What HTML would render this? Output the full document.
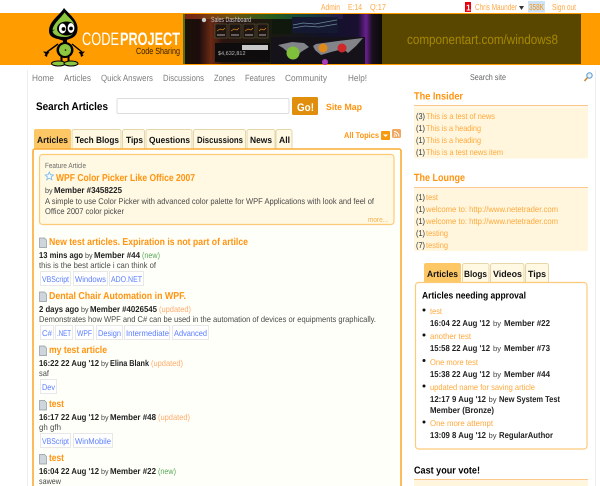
<!DOCTYPE html>
<html lang="en"><head><meta charset="utf-8"><title>Code Project</title>
<style>
html,body{margin:0;padding:0;background:#fff;width:600px;height:486px;overflow:hidden}
svg{display:block;font-family:"Liberation Sans",sans-serif;font-size:8.4px;text-rendering:geometricPrecision;filter:blur(.3px)}
.o{fill:#ff9410;font-weight:bold}
.l{fill:#ffa93c}
.k{fill:#222;font-weight:bold;font-size:8.6px}
.g{fill:#4a4a4a}
.n{fill:#7e7e7e;font-size:9px}
.t{fill:#5a7eff}
.tb{fill:#111;font-weight:bold;font-size:9px}
.tag{fill:#fff;stroke:#e8e8e8}
.c{fill:#333;font-size:8.400px}
.by{fill:#444;font-size:7.600px}
</style></head><body>
<svg width="600" height="486" viewBox="0 0 600 486" xmlns="http://www.w3.org/2000/svg">
<defs>
<linearGradient id="bn" x1="0" x2="1" y1="0" y2="0"><stop offset="0" stop-color="#1a1408"/><stop offset=".08" stop-color="#1c0c0c"/><stop offset=".14" stop-color="#6a2a14"/><stop offset=".2" stop-color="#2a1410"/><stop offset=".45" stop-color="#1a1a10"/><stop offset=".72" stop-color="#12122a"/><stop offset=".88" stop-color="#1a1030"/><stop offset=".92" stop-color="#6a1f90"/><stop offset=".95" stop-color="#1a1020"/><stop offset="1" stop-color="#0c0a08"/></linearGradient>
<linearGradient id="tp" x1="0" x2="1" y1="0" y2="0"><stop offset="0" stop-color="#8a2418"/><stop offset=".3" stop-color="#7a5a10"/><stop offset=".55" stop-color="#2a6a1c"/><stop offset=".75" stop-color="#145040"/><stop offset="1" stop-color="#2a1a50"/></linearGradient>
</defs>
<!-- top links -->
<g fill="#ffa844" font-size="8.800">
<text x="321" y="10" textLength="19" lengthAdjust="spacingAndGlyphs">Admin</text>
<text x="348" y="10" textLength="14" lengthAdjust="spacingAndGlyphs">E:14</text>
<text x="370" y="10" textLength="16" lengthAdjust="spacingAndGlyphs">Q:17</text>
<text x="475" y="10" textLength="42" lengthAdjust="spacingAndGlyphs">Chris Maunder</text>
<text x="552" y="10" textLength="24" lengthAdjust="spacingAndGlyphs">Sign out</text>
</g>
<rect x="465" y="2" width="6" height="10" fill="#e8000c"/>
<text x="466" y="10.500" fill="#fff" font-weight="bold" font-size="8.500">1</text>
<path d="M519 6h5l-2.500 4z" fill="#333"/>
<rect x="528" y="1" width="17" height="11.500" fill="#cfe3f6"/>
<text x="529" y="10" fill="#f79410" font-size="8.800" textLength="15" lengthAdjust="spacingAndGlyphs">358K</text>
<!-- orange band -->
<rect x="0" y="13" width="600" height="52" fill="#ff9c00"/>
<rect x="183" y="14" width="199" height="50" fill="url(#bn)"/>
<rect x="382" y="14" width="199" height="50" fill="#594700"/>
<rect x="183" y="14" width="160" height="5" fill="url(#tp)" opacity=".85"/>
<rect x="183" y="14" width="2" height="50" fill="#5d6a18"/>
<!-- dashboard detail -->
<circle cx="204" cy="20" r="2.200" fill="#ccc"/>
<text x="211" y="22" fill="#c8c8c8" font-size="7.500" textLength="40" lengthAdjust="spacingAndGlyphs">Sales Dashboard</text>
<g fill="#1e1410" stroke="#6f6f48" stroke-width=".5">
<rect x="215" y="24" width="12" height="14"/><rect x="229" y="24" width="12" height="14"/><rect x="243" y="24" width="12" height="14"/><rect x="257" y="24" width="11" height="14"/>
</g>
<path d="M217 31l3-2 3 1 2-2M231 31l3-2 3 1 2-2M245 31l3-2 3 1 2-2M259 31l2-2 3 1 2-2" stroke="#d88a20" stroke-width=".7" fill="none"/>
<path d="M217 35h8M231 35h8M245 35h8M259 35h7" stroke="#aaa" stroke-width="1"/>
<rect x="215" y="43" width="55" height="19" fill="#0e0c0c"/>
<text x="218" y="55" fill="#bbb" font-size="5.500">$4,632,812</text>
<rect x="242" y="45" width="26" height="5" fill="#c8c8c8"/>
<rect x="272" y="19" width="20" height="15" fill="#10180e"/>
<rect x="292" y="17" width="46" height="16" fill="#141830"/>
<path d="M293 25l10-2 12 1 22-4M293 28l12-2 14 1 18-3" stroke="#6f8a9a" stroke-width=".7" fill="none"/>
<rect x="271" y="37" width="94" height="27" fill="#15121a"/>
<path d="M278 45l14-3 12 1 5 4-8 5-4 4-8-3-6-5zM316 44l22-3 25-3-7 8-8 7-5-4-12 3-10 3-6-5-2-4z" fill="#83838a"/>
<circle cx="293" cy="53" r="6.500" fill="#7fbf3a"/>
<circle cx="323" cy="48" r="4.500" fill="#e08a1c"/>
<circle cx="342" cy="48" r="4.500" fill="#d02828"/>
<circle cx="325" cy="62" r="3" fill="#a83cb8"/>
<text x="407" y="44" fill="#a58800" font-size="13.500" textLength="151" lengthAdjust="spacingAndGlyphs">componentart.com/windows8</text>
<!-- logo -->
<path d="M64 8C60 15 49 21 49 31C49 36 53 38 58 39L64 41L72 38C76 36 77.500 33 77.500 28C77.500 20 69 14 64 8Z" fill="#000"/>
<path d="M64.500 12.500C61 18 53.500 23 52.500 30L75 27C74.500 21 68 17 64.500 12.500Z" fill="#8dc63f"/>
<path d="M52.500 31C53 35 58 37 65 37C70 37 74.500 34 75 29L60 27Z" fill="#8dc63f"/>
<ellipse cx="66.500" cy="28.500" rx="9.500" ry="7" fill="#000"/>
<ellipse cx="62.500" cy="28.500" rx="3.600" ry="5" fill="#fff"/>
<ellipse cx="71" cy="28" rx="3.400" ry="5" fill="#fff"/>
<circle cx="63.500" cy="29" r="1.900" fill="#000"/><circle cx="71" cy="28.500" r="1.900" fill="#000"/>
<ellipse cx="65" cy="50" rx="8.500" ry="8" fill="#000"/>
<ellipse cx="65" cy="50" rx="6" ry="6" fill="#8dc63f"/>
<circle cx="65.500" cy="50" r=".8" fill="#000"/>
<rect x="63" y="38" width="4" height="6" fill="#000"/>
<path d="M58 44L47 52M72 44L82 52" stroke="#000" stroke-width="1.400" fill="none"/>
<path d="M43 51.500l6.500.5-2 2.500-.5 2.500-2.500-1.500 1-1.500z" fill="#000"/><path d="M85 51.500l-6.500.5 2 2.500.5 2.500 2.500-1.500-1-1.500z" fill="#000"/>
<path d="M61.500 57v4M68.500 57v4" stroke="#000" stroke-width="2"/>
<ellipse cx="58.500" cy="63.500" rx="7" ry="2.500" fill="#8dc63f" stroke="#000" stroke-width="1"/>
<ellipse cx="71" cy="63.500" rx="7" ry="2.500" fill="#8dc63f" stroke="#000" stroke-width="1"/>
<text x="82" y="45" fill="#fff" font-size="18" textLength="37" lengthAdjust="spacingAndGlyphs">CODE</text>
<text x="120" y="45" fill="#fff" font-size="18" font-weight="bold" textLength="60" lengthAdjust="spacingAndGlyphs">PROJECT</text>
<text x="136" y="54" fill="#2e1e00" font-size="9" textLength="44" lengthAdjust="spacingAndGlyphs">Code Sharing</text>
<!-- page rails -->
<rect x="27" y="70" width="1" height="416" fill="#eee"/>
<rect x="595" y="70" width="1" height="416" fill="#eee"/>
<!-- nav -->
<g class="n">
<text x="32" y="81" textLength="22" lengthAdjust="spacingAndGlyphs">Home</text>
<text x="64" y="81" textLength="27" lengthAdjust="spacingAndGlyphs">Articles</text>
<text x="101" y="81" textLength="52" lengthAdjust="spacingAndGlyphs">Quick Answers</text>
<text x="163" y="81" textLength="41" lengthAdjust="spacingAndGlyphs">Discussions</text>
<text x="214" y="81" textLength="21" lengthAdjust="spacingAndGlyphs">Zones</text>
<text x="245" y="81" textLength="30" lengthAdjust="spacingAndGlyphs">Features</text>
<text x="285" y="81" textLength="42" lengthAdjust="spacingAndGlyphs">Community</text>
<text x="348" y="81" textLength="19" lengthAdjust="spacingAndGlyphs">Help!</text>
</g>
<text x="470" y="80" fill="#666" font-size="8.500" textLength="36" lengthAdjust="spacingAndGlyphs">Search site</text>
<circle cx="589.500" cy="75.500" r="2.700" fill="#e8f2fb" stroke="#5b9bd5" stroke-width="1"/>
<path d="M587.500 77.500L584.500 81" stroke="#c98a3a" stroke-width="1.600"/>
<!-- search -->
<text x="36" y="110" fill="#000" font-weight="bold" font-size="11" textLength="72" lengthAdjust="spacingAndGlyphs">Search Articles</text>
<rect x="117" y="98.500" width="172" height="15" rx="1.500" fill="#fff" stroke="#ddd"/>
<rect x="292" y="97" width="26" height="18" rx="1.500" fill="#e08e0b"/>
<text x="297" y="111" fill="#fff" font-weight="bold" font-size="11" textLength="17" lengthAdjust="spacingAndGlyphs">Go!</text>
<text x="326" y="110" class="o" font-size="9" textLength="36" lengthAdjust="spacingAndGlyphs">Site Map</text>
<!-- tabs -->
<g fill="#fff8e2" stroke="#e6d6a8">
<rect x="72" y="129.500" width="49" height="20" rx="2"/>
<rect x="122.500" y="129.500" width="22" height="20" rx="2"/>
<rect x="146" y="129.500" width="46" height="20" rx="2"/>
<rect x="193.500" y="129.500" width="52" height="20" rx="2"/>
<rect x="247" y="129.500" width="28" height="20" rx="2"/>
<rect x="276" y="129.500" width="16" height="20" rx="2"/>
</g>
<rect x="34" y="129" width="37" height="21" rx="2" fill="#fdc766"/>
<g class="tb">
<text x="37" y="143" textLength="31" lengthAdjust="spacingAndGlyphs">Articles</text>
<text x="75" y="143" textLength="44" lengthAdjust="spacingAndGlyphs">Tech Blogs</text>
<text x="126" y="143" textLength="17" lengthAdjust="spacingAndGlyphs">Tips</text>
<text x="149" y="143" textLength="41" lengthAdjust="spacingAndGlyphs">Questions</text>
<text x="197" y="143" textLength="46" lengthAdjust="spacingAndGlyphs">Discussions</text>
<text x="250" y="143" textLength="22" lengthAdjust="spacingAndGlyphs">News</text>
<text x="279" y="143" textLength="11" lengthAdjust="spacingAndGlyphs">All</text>
</g>
<text x="344" y="138" class="o" textLength="35" lengthAdjust="spacingAndGlyphs">All Topics</text>
<rect x="381" y="131" width="9" height="9" rx="1" fill="#f79a10"/>
<path d="M383 134.500h5l-2.500 2.500z" fill="#fff"/>
<rect x="392" y="129" width="9" height="9" rx="1.500" fill="#f0a860"/>
<path d="M394 131.500a5 5 0 0 1 5 5M394 133.800a2.700 2.700 0 0 1 2.700 2.700" stroke="#fff" stroke-width=".9" fill="none"/><circle cx="394.500" cy="136" r=".8" fill="#fff"/>
<!-- main panel -->
<rect x="33" y="149" width="368" height="345" rx="2" fill="#fffffa" stroke="#fbac36" stroke-width="1.600"/>
<rect x="39.500" y="154.500" width="354.500" height="70" rx="3" fill="#fff8e2" stroke="#fdca7a" stroke-width="1.200"/>
<text x="45" y="168" fill="#666" font-size="7.500" textLength="41" lengthAdjust="spacingAndGlyphs">Feature Article</text>
<path d="M49.300 172l1.200 2.700 2.900.3-2.200 1.900.7 2.900-2.600-1.600-2.600 1.600.7-2.900-2.200-1.900 2.900-.3z" fill="#f4fbff" stroke="#7ab8e8" stroke-width=".8"/>
<text x="56" y="181" class="o" font-size="10" textLength="139" lengthAdjust="spacingAndGlyphs">WPF Color Picker Like Office 2007</text>
<text x="45" y="193" class="by" textLength="7.500" lengthAdjust="spacingAndGlyphs">by</text>
<text x="54" y="193" class="k" textLength="68" lengthAdjust="spacingAndGlyphs">Member #3458225</text>
<text x="45" y="204" class="g" textLength="329" lengthAdjust="spacingAndGlyphs">A simple to use Color Picker with advanced color palette for WPF Applications with look and feel of</text>
<text x="45" y="214" class="g" textLength="79" lengthAdjust="spacingAndGlyphs">Office 2007 color picker</text>
<text x="368" y="222" fill="#f5b050" font-size="7.500" textLength="20" lengthAdjust="spacingAndGlyphs">more...</text>
<!-- doc icons -->
<g fill="#cfd5dc" stroke="#8f98a0" stroke-width=".7">
<path d="M39.500 238h5l2 2v7.500h-7z"/><path d="M39.500 292h5l2 2v7.500h-7z"/><path d="M39.500 346h5l2 2v7.500h-7z"/><path d="M39.500 400.500h5l2 2v7.500h-7z"/><path d="M39.500 454.500h5l2 2v7.500h-7z"/>
</g>
<!-- article 1 -->
<text x="49" y="245" class="o" font-size="10" textLength="199" lengthAdjust="spacingAndGlyphs">New test articles. Expiration is not part of artilce</text>
<text x="39" y="258" class="k" textLength="44" lengthAdjust="spacingAndGlyphs">13 mins ago</text>
<text x="85" y="258" class="by" textLength="7.500" lengthAdjust="spacingAndGlyphs">by</text>
<text x="94" y="258" class="k" textLength="46" lengthAdjust="spacingAndGlyphs">Member #44</text>
<text x="142" y="258" fill="#5aa85a" textLength="18" lengthAdjust="spacingAndGlyphs">(new)</text>
<text x="39" y="268" class="g" textLength="117" lengthAdjust="spacingAndGlyphs">this is the best article i can think of</text>
<rect class="tag" x="40.500" y="271.500" width="30" height="14"/><rect class="tag" x="73.500" y="271.500" width="34" height="14"/><rect class="tag" x="109.500" y="271.500" width="34" height="14"/>
<text x="42" y="282" class="t" textLength="27" lengthAdjust="spacingAndGlyphs">VBScript</text>
<text x="75" y="282" class="t" textLength="31" lengthAdjust="spacingAndGlyphs">Windows</text>
<text x="111" y="282" class="t" textLength="31" lengthAdjust="spacingAndGlyphs">ADO.NET</text>
<!-- article 2 -->
<text x="49" y="299" class="o" font-size="10" textLength="137" lengthAdjust="spacingAndGlyphs">Dental Chair Automation in WPF.</text>
<text x="39" y="312" class="k" textLength="40" lengthAdjust="spacingAndGlyphs">2 days ago</text>
<text x="81" y="312" class="by" textLength="7.500" lengthAdjust="spacingAndGlyphs">by</text>
<text x="90" y="312" class="k" textLength="67" lengthAdjust="spacingAndGlyphs">Member #4026545</text>
<text x="159" y="312" fill="#ffac6c" textLength="32" lengthAdjust="spacingAndGlyphs">(updated)</text>
<text x="39" y="322" class="g" textLength="337" lengthAdjust="spacingAndGlyphs">Demonstrates how WPF and C# can be used in the automation of devices or equipments graphically.</text>
<rect class="tag" x="40.500" y="325.500" width="13" height="14"/><rect class="tag" x="55.500" y="325.500" width="17" height="14"/><rect class="tag" x="75.500" y="325.500" width="18" height="14"/><rect class="tag" x="96.500" y="325.500" width="26" height="14"/><rect class="tag" x="124.500" y="325.500" width="45" height="14"/><rect class="tag" x="172.500" y="325.500" width="36" height="14"/>
<text x="42" y="336" class="t" textLength="10" lengthAdjust="spacingAndGlyphs">C#</text>
<text x="57" y="336" class="t" textLength="14" lengthAdjust="spacingAndGlyphs">.NET</text>
<text x="77" y="336" class="t" textLength="15" lengthAdjust="spacingAndGlyphs">WPF</text>
<text x="98" y="336" class="t" textLength="23" lengthAdjust="spacingAndGlyphs">Design</text>
<text x="126" y="336" class="t" textLength="43" lengthAdjust="spacingAndGlyphs">Intermediate</text>
<text x="174" y="336" class="t" textLength="33" lengthAdjust="spacingAndGlyphs">Advanced</text>
<!-- article 3 -->
<text x="49" y="353" class="o" font-size="10" textLength="58" lengthAdjust="spacingAndGlyphs">my test article</text>
<text x="39" y="366" class="k" textLength="60" lengthAdjust="spacingAndGlyphs">16:22 22 Aug '12</text>
<text x="101" y="366" class="by" textLength="7.500" lengthAdjust="spacingAndGlyphs">by</text>
<text x="110" y="366" class="k" textLength="39" lengthAdjust="spacingAndGlyphs">Elina Blank</text>
<text x="151" y="366" fill="#ffac6c" textLength="32" lengthAdjust="spacingAndGlyphs">(updated)</text>
<text x="39" y="376" class="g" textLength="10" lengthAdjust="spacingAndGlyphs">saf</text>
<rect class="tag" x="40.500" y="379.500" width="16" height="14"/>
<text x="42" y="390" class="t" textLength="13" lengthAdjust="spacingAndGlyphs">Dev</text>
<!-- article 4 -->
<text x="49" y="407" class="o" font-size="10" textLength="15" lengthAdjust="spacingAndGlyphs">test</text>
<text x="39" y="420" class="k" textLength="60" lengthAdjust="spacingAndGlyphs">16:17 22 Aug '12</text>
<text x="101" y="420" class="by" textLength="7.500" lengthAdjust="spacingAndGlyphs">by</text>
<text x="110" y="420" class="k" textLength="46" lengthAdjust="spacingAndGlyphs">Member #48</text>
<text x="158" y="420" fill="#ffac6c" textLength="32" lengthAdjust="spacingAndGlyphs">(updated)</text>
<text x="39" y="430" class="g" textLength="22" lengthAdjust="spacingAndGlyphs">gh gfh</text>
<rect class="tag" x="40.500" y="433.500" width="30" height="14"/><rect class="tag" x="73.500" y="433.500" width="39" height="14"/>
<text x="42" y="444" class="t" textLength="27" lengthAdjust="spacingAndGlyphs">VBScript</text>
<text x="75" y="444" class="t" textLength="36" lengthAdjust="spacingAndGlyphs">WinMobile</text>
<!-- article 5 -->
<text x="49" y="461" class="o" font-size="10" textLength="15" lengthAdjust="spacingAndGlyphs">test</text>
<text x="39" y="474" class="k" textLength="60" lengthAdjust="spacingAndGlyphs">16:04 22 Aug '12</text>
<text x="101" y="474" class="by" textLength="7.500" lengthAdjust="spacingAndGlyphs">by</text>
<text x="110" y="474" class="k" textLength="46" lengthAdjust="spacingAndGlyphs">Member #22</text>
<text x="158" y="474" fill="#5aa85a" textLength="18" lengthAdjust="spacingAndGlyphs">(new)</text>
<text x="39" y="484" class="g" textLength="22" lengthAdjust="spacingAndGlyphs">sawew</text>
<!-- Insider -->
<text x="414" y="99.500" class="o" font-size="10.500" textLength="49" lengthAdjust="spacingAndGlyphs">The Insider</text>
<rect x="414" y="105" width="174" height="1.200" fill="#fdc98a"/>
<rect x="414" y="107.500" width="174" height="51" rx="1.500" fill="#fff6dd"/>
<g class="c">
<text x="416" y="119" textLength="9" lengthAdjust="spacingAndGlyphs">(3)</text><text x="416" y="131" textLength="9" lengthAdjust="spacingAndGlyphs">(1)</text><text x="416" y="143" textLength="9" lengthAdjust="spacingAndGlyphs">(1)</text><text x="416" y="155" textLength="9" lengthAdjust="spacingAndGlyphs">(1)</text>
</g>
<g class="l">
<text x="426" y="119" textLength="69" lengthAdjust="spacingAndGlyphs">This is a test of news</text>
<text x="426" y="131" textLength="55" lengthAdjust="spacingAndGlyphs">This is a heading</text>
<text x="426" y="143" textLength="55" lengthAdjust="spacingAndGlyphs">This is a heading</text>
<text x="426" y="155" textLength="77" lengthAdjust="spacingAndGlyphs">This is a test news item</text>
</g>
<!-- Lounge -->
<text x="414" y="181" class="o" font-size="10.500" textLength="51" lengthAdjust="spacingAndGlyphs">The Lounge</text>
<rect x="414" y="187" width="174" height="1.200" fill="#fdc98a"/>
<rect x="414" y="189" width="174" height="62" rx="1.500" fill="#fff6dd"/>
<g class="c">
<text x="416" y="200" textLength="9" lengthAdjust="spacingAndGlyphs">(1)</text><text x="416" y="212" textLength="9" lengthAdjust="spacingAndGlyphs">(1)</text><text x="416" y="224" textLength="9" lengthAdjust="spacingAndGlyphs">(1)</text><text x="416" y="236" textLength="9" lengthAdjust="spacingAndGlyphs">(1)</text><text x="416" y="248" textLength="9" lengthAdjust="spacingAndGlyphs">(7)</text>
</g>
<g class="l">
<text x="426" y="200" textLength="12" lengthAdjust="spacingAndGlyphs">test</text>
<text x="426" y="212" textLength="132" lengthAdjust="spacingAndGlyphs">welcome to: http://www.netetrader.com</text>
<text x="426" y="224" textLength="132" lengthAdjust="spacingAndGlyphs">welcome to: http://www.netetrader.com</text>
<text x="426" y="236" textLength="22" lengthAdjust="spacingAndGlyphs">testing</text>
<text x="426" y="248" textLength="22" lengthAdjust="spacingAndGlyphs">testing</text>
</g>
<!-- side tabs -->
<g fill="#fff8e2" stroke="#e6d6a8">
<rect x="462.500" y="263.500" width="26.500" height="20" rx="2"/>
<rect x="490.500" y="263.500" width="33.500" height="20" rx="2"/>
<rect x="525.500" y="263.500" width="23" height="20" rx="2"/>
</g>
<rect x="424" y="263" width="37" height="20" rx="2" fill="#fdc766"/>
<g class="tb">
<text x="427" y="277" textLength="31" lengthAdjust="spacingAndGlyphs">Articles</text>
<text x="464" y="277" textLength="23" lengthAdjust="spacingAndGlyphs">Blogs</text>
<text x="493" y="277" textLength="29" lengthAdjust="spacingAndGlyphs">Videos</text>
<text x="528" y="277" textLength="18" lengthAdjust="spacingAndGlyphs">Tips</text>
</g>
<rect x="415.500" y="282.500" width="171.500" height="166.500" rx="3" fill="#fff" stroke="#fdca7a" stroke-width="1.200"/>
<text x="422" y="298.500" fill="#000" font-weight="bold" font-size="9.500" textLength="104" lengthAdjust="spacingAndGlyphs">Articles needing approval</text>
<g fill="#111"><circle cx="424" cy="310" r="1.500"/><circle cx="424" cy="335" r="1.500"/><circle cx="424" cy="360.500" r="1.500"/><circle cx="424" cy="386" r="1.500"/><circle cx="424" cy="422" r="1.500"/></g>
<g class="l">
<text x="430" y="314" textLength="12" lengthAdjust="spacingAndGlyphs">test</text>
<text x="430" y="339" textLength="41" lengthAdjust="spacingAndGlyphs">another test</text>
<text x="430" y="365" textLength="48" lengthAdjust="spacingAndGlyphs">One more test</text>
<text x="430" y="390" textLength="105" lengthAdjust="spacingAndGlyphs">updated name for saving article</text>
<text x="430" y="426" textLength="63" lengthAdjust="spacingAndGlyphs">One more attempt</text>
</g>
<g class="k">
<text x="430" y="326" textLength="60" lengthAdjust="spacingAndGlyphs">16:04 22 Aug '12</text><text x="504" y="326" textLength="46" lengthAdjust="spacingAndGlyphs">Member #22</text>
<text x="430" y="351" textLength="60" lengthAdjust="spacingAndGlyphs">15:58 22 Aug '12</text><text x="504" y="351" textLength="46" lengthAdjust="spacingAndGlyphs">Member #73</text>
<text x="430" y="377" textLength="60" lengthAdjust="spacingAndGlyphs">15:38 22 Aug '12</text><text x="504" y="377" textLength="46" lengthAdjust="spacingAndGlyphs">Member #44</text>
<text x="430" y="402" textLength="56" lengthAdjust="spacingAndGlyphs">12:17 9 Aug '12</text><text x="499" y="402" textLength="61" lengthAdjust="spacingAndGlyphs">New System Test</text>
<text x="430" y="413" textLength="64" lengthAdjust="spacingAndGlyphs">Member (Bronze)</text>
<text x="430" y="438" textLength="56" lengthAdjust="spacingAndGlyphs">13:09 8 Aug '12</text><text x="499" y="438" textLength="54" lengthAdjust="spacingAndGlyphs">RegularAuthor</text>
</g>
<g class="by">
<text x="493" y="326">by</text><text x="493" y="351">by</text><text x="493" y="377">by</text><text x="488.500" y="402">by</text><text x="488.500" y="438">by</text>
</g>
<text x="414" y="473.500" fill="#000" font-weight="bold" font-size="10" textLength="66" lengthAdjust="spacingAndGlyphs">Cast your vote!</text>
<rect x="414" y="479" width="174" height="1.200" fill="#fdc98a"/>
<rect x="414" y="481" width="174" height="5" fill="#fff6dd"/>
</svg>
</body></html>
